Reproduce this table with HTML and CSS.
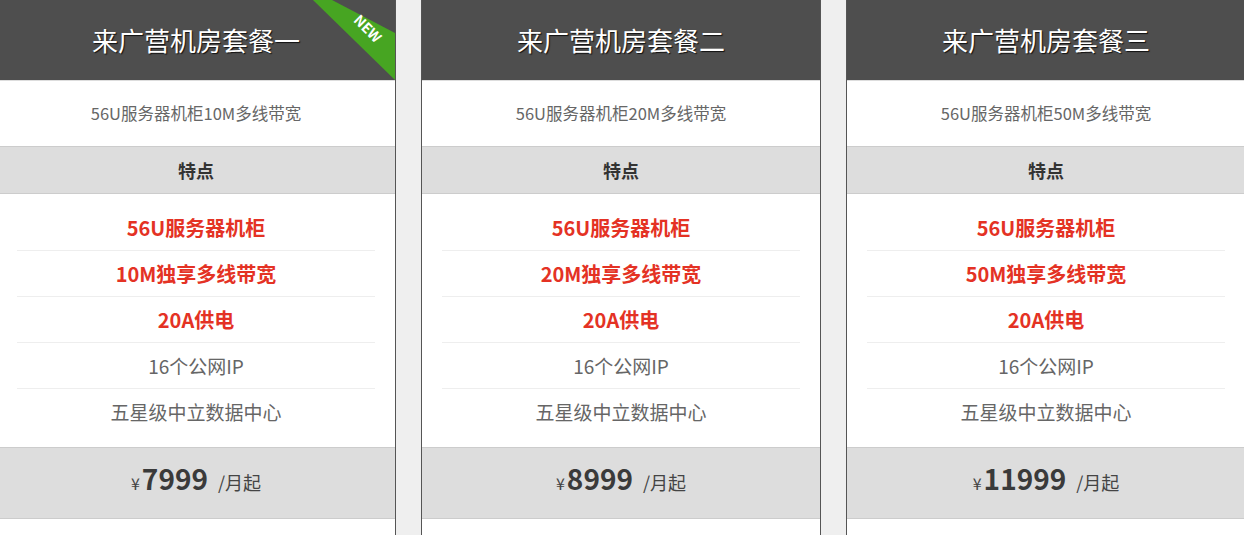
FILE: index.html
```html
<!DOCTYPE html>
<html lang="zh-CN">
<head>
    <meta charset="UTF-8">
    <meta name="viewport" content="width=device-width, initial-scale=1.0">
    <title>来广营机房套餐</title>
    <link rel="stylesheet" href="styles.css">
</head>
<body>
    <div class="plans">
        <!-- 套餐一 -->
        <div class="plan">
            <div class="plan-head">
                来广营机房套餐一
                <svg class="ribbon" width="82" height="80" viewBox="0 0 82 80">
                    <polygon points="0,0 19,0 82,33 82,80" fill="#47a522"/>
                </svg>
                <span class="ribbon-text">NEW</span>
            </div>
            <div class="plan-desc">56U服务器机柜10M多线带宽</div>
            <div class="plan-label">特点</div>
            <ul class="plan-list">
                <li class="hot">56U服务器机柜</li>
                <li class="hot">10M独享多线带宽</li>
                <li class="hot">20A供电</li>
                <li>16个公网IP</li>
                <li>五星级中立数据中心</li>
            </ul>
            <div class="plan-price"><span class="yen">¥</span><b>7999</b><span class="unit">/月起</span></div>
            <div class="plan-foot"></div>
        </div>

        <!-- 套餐二 -->
        <div class="plan">
            <div class="plan-head">来广营机房套餐二</div>
            <div class="plan-desc">56U服务器机柜20M多线带宽</div>
            <div class="plan-label">特点</div>
            <ul class="plan-list">
                <li class="hot">56U服务器机柜</li>
                <li class="hot">20M独享多线带宽</li>
                <li class="hot">20A供电</li>
                <li>16个公网IP</li>
                <li>五星级中立数据中心</li>
            </ul>
            <div class="plan-price"><span class="yen">¥</span><b>8999</b><span class="unit">/月起</span></div>
            <div class="plan-foot"></div>
        </div>

        <!-- 套餐三 -->
        <div class="plan">
            <div class="plan-head">来广营机房套餐三</div>
            <div class="plan-desc">56U服务器机柜50M多线带宽</div>
            <div class="plan-label">特点</div>
            <ul class="plan-list">
                <li class="hot">56U服务器机柜</li>
                <li class="hot">50M独享多线带宽</li>
                <li class="hot">20A供电</li>
                <li>16个公网IP</li>
                <li>五星级中立数据中心</li>
            </ul>
            <div class="plan-price"><span class="yen">¥</span><b>11999</b><span class="unit">/月起</span></div>
            <div class="plan-foot"></div>
        </div>
    </div>
</body>
</html>
```

FILE: styles.css
```css
body {
    margin: 0;
    padding: 0;
    background-color: #efefef;
    font-family: "Noto Sans CJK SC", "Noto Sans", sans-serif;
    overflow: hidden;
}

.plans {
    display: flex;
    gap: 25px;
    margin-left: -4px;
}

.plan {
    flex: 0 0 400px;
    box-sizing: border-box;
    background-color: #fff;
    border-left: 1px solid #555;
    border-right: 1px solid #555;
    text-align: center;
}

.plan-head {
    position: relative;
    height: 80px;
    line-height: 80px;
    background-color: #4e4e4e;
    border-bottom: 1px solid #ddd;
    color: #fff;
    font-size: 26px;
    text-shadow: 1px 1px 1px #111;
    overflow: hidden;
}

/* NEW ribbon on the first plan */
.ribbon {
    position: absolute;
    top: 0;
    right: 0;
}

.ribbon-text {
    position: absolute;
    top: 21px;
    right: 11px;
    line-height: 15px;
    font-size: 14px;
    font-weight: bold;
    text-shadow: none;
    transform: rotate(45deg);
}

.plan-desc {
    height: 65px;
    line-height: 65px;
    font-size: 16.5px;
    color: #666;
}

.plan-label {
    height: 46px;
    line-height: 46px;
    background-color: #ddd;
    border-top: 1px solid #ccc;
    border-bottom: 1px solid #ccc;
    font-size: 18px;
    font-weight: bold;
    color: #333;
}

.plan-list {
    list-style: none;
    margin: 0;
    padding: 11px 20px 13px;
}

.plan-list li {
    height: 45px;
    line-height: 45px;
    font-size: 19px;
    color: #666;
    border-bottom: 1px solid #eee;
}

.plan-list li:last-child {
    border-bottom: none;
}

.plan-list li.hot {
    font-size: 20px;
    font-weight: bold;
    color: #e43224;
}

.plan-price {
    height: 70px;
    line-height: 60px;
    background-color: #ddd;
    border-top: 1px solid #ccc;
    border-bottom: 1px solid #ccc;
    color: #444;
}

.plan-price .yen {
    font-size: 16px;
    margin-right: 2px;
}

.plan-price b {
    font-size: 28px;
    color: #3a3a3a;
}

.plan-price .unit {
    font-size: 18px;
    margin-left: 10px;
}

.plan-foot {
    height: 40px;
}
```
